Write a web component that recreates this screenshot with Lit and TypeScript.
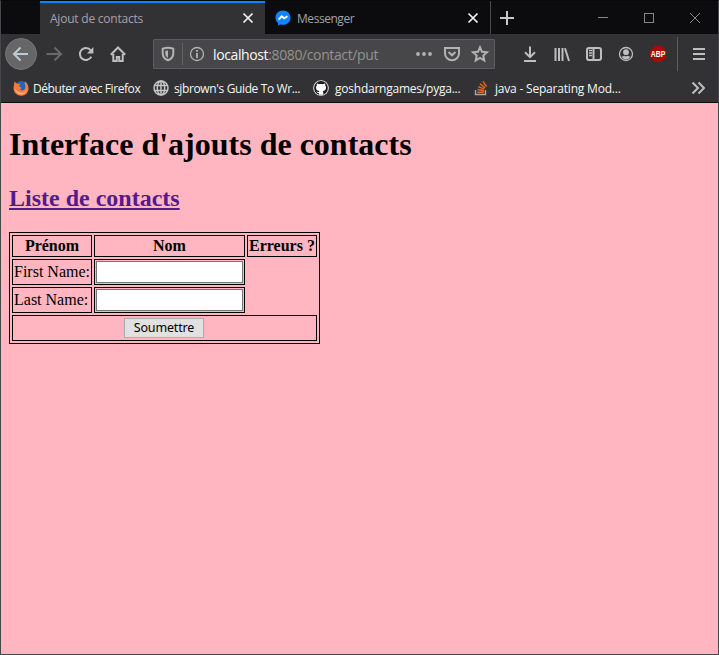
import { LitElement, html, css, svg } from "lit";
import { customElement, property } from "lit/decorators.js";

const icons: Record<string, unknown> = {
  back: svg`<path d="M15 8H1.5M7.5 1.5 1 8l6.500 6.500" class="l"/>`,
  forward: svg`<path d="M0.500 8H14M8.500 1.500 15 8l-6.500 6.500" class="l"/>`,
  reload: svg`<path d="M13.300 10.600A6 6 0 1 1 12.600 4.200" class="l"/><path d="M15.400 1v6.500H9z" class="f"/>`,
  home: svg`<path d="M.800 8.700 8 1.500l7.200 7.200M3.300 8v7h3.500v-4h2.400v4h3.500V8" class="l"/>`,
  shield: svg`<path d="M8 1.800c2 0 3.800.4 5.300 1v4.500c0 3.400-2.300 6-5.300 7-3-1-5.300-3.600-5.300-7V2.800c1.500-.6 3.300-1 5.300-1z" class="l"/><path d="M8 4.500c-1 0-2 .2-2.700.4v2.600c0 2 1 3.500 2.700 4.400z" class="f"/>`,
  info: svg`<circle cx="8" cy="8" r="6.500" class="t"/><path d="M7.100 7h1.800v5H7.100zM7.100 4h1.800v1.800H7.100z" class="f"/>`,
  dots: svg`<circle cx="2" cy="8" r="1.900" class="f"/><circle cx="8" cy="8" r="1.900" class="f"/><circle cx="14" cy="8" r="1.900" class="f"/>`,
  pocket: svg`<path d="M1 2h14v5.500a7 6.700 0 0 1-14 0z" class="l"/><path d="M4.600 6 8 9.300 11.400 6" class="l"/>`,
  star: svg`<path d="m8 1.300 2 4.500 5 .5-3.700 3.300 1 4.900L8 12l-4.300 2.500 1-4.900L1 6.300l5-.5z" class="l"/>`,
  download: svg`<path d="M8 .5v10.300M3 6.200l5 5 5-5M2 15h12" class="l"/>`,
  library: svg`<path d="M1.500 2v13M5 2v13M8.500 2v13M11 2.300 15 15" class="l"/>`,
  sidebar: svg`<rect x="1" y="2" width="14" height="12" rx="2" class="l"/><path d="M7.500 2v12" class="l"/><path d="M3 4.500h3M3 7h3M3 9.500h3" class="t"/>`,
  account: svg`<circle cx="8" cy="8" r="6.500" class="t"/><circle cx="8" cy="6.200" r="2.900" class="f"/><path d="M3.500 10.500c1 .2 2-.8 3-.8 1 .8 2 .8 3 0 1 0 2 1 3 .8-1 2-2.700 3-4.500 3s-3.500-1-4.500-3z" class="f"/>`,
  abp: svg`<path d="M4.700 0h6.600L16 4.700v6.600L11.300 16H4.700L0 11.300V4.700z" fill="#a80b00"/><text x="8" y="11" text-anchor="middle" font-family="Liberation Sans, sans-serif" font-size="8.500" font-weight="700" fill="#fff" textLength="14.500" lengthAdjust="spacingAndGlyphs">ABP</text>`,
  menu: svg`<path d="M2 3h12M2 8h12M2 13h12" class="l"/>`,
  close: svg`<path d="m3.500 3.500 9 9m0-9-9 9" class="m"/>`,
  plus: svg`<path d="M8 1v14M1 8h14" class="l"/>`,
  min: svg`<path d="M3 7.500h10" class="h"/>`,
  max: svg`<rect x="3.500" y="3.500" width="9" height="9" class="h"/>`,
  quit: svg`<path d="m3 3 10 10M13 3 3 13" class="h"/>`,
  more: svg`<path d="m2.500 2.500 5.500 5.500-5.500 5.500M8.500 2.500l5.500 5.500-5.500 5.500" class="l"/>`,
  messenger: svg`<path d="M8 .500c-4.300 0-7.500 3.100-7.500 7.200 0 2.100.9 4 2.500 5.300v2.600l2.300-1.200c.8.300 1.700.4 2.700.4 4.300 0 7.500-3.100 7.500-7.100S12.300.5 8 .5z" fill="#1083ff"/><path d="m3.600 9.500 3.100-3.200 2.500 2 3.200-2" fill="none" stroke="#fff" stroke-width="1.800"/>`,
  firefox: svg`<circle cx="8.300" cy="7" r="6" fill="#1768c9"/><path d="M1.500 1.500 4 3.700l3.500.2-1.500 2 2.500 2-1.500 1.500c2 1.700 4.800.8 5.300-1.700.4-2-1-3.500-.5-6.500 3 2.200 3.700 4.500 3.700 7.300 0 4.200-3 7.200-7 7.200C3.500 15.900.3 12 .5 7.700z" fill="#f07a42"/><path d="M2 8c1 3 4 5.300 8 4.600 2-.4 3.200-2 3.700-4.400.4 3.300-2 6.300-5.200 6.300C5 14.500 2 12 2 8z" fill="#ffb36b"/>`,
  globe: svg`<circle cx="8" cy="8" r="7" class="g"/><ellipse cx="8" cy="8" rx="3.700" ry="7" class="g"/><path d="M8 1v14M1.500 5.500h13M1.500 10.500h13" class="g"/>`,
  github: svg`<circle cx="8" cy="8" r="7.800" fill="#ececec"/><circle cx="8" cy="8" r="6.900" fill="#1b1b1d"/><path d="M3.900 3.400c.9 0 1.500.4 2 .8 1.400-.3 2.800-.3 4.200 0 .5-.4 1.100-.8 2-.8.4.8.3 1.500.1 2 .7.8.9 1.600.8 2.600-.2 2-1.500 2.900-3.200 3.100.5.600.5 1.200.5 3.700H5.900v-1.900c-1.600.3-1.800-.9-2.500-1.500 1-.1 1.300 1 2.500.7 0-.4.1-.7.400-1C4.500 10.900 3.200 10 3 8c-.1-1 .1-1.800.8-2.600-.2-.5-.3-1.200.1-2z" fill="#fff"/>`,
  stack: svg`<path d="M2.500 10v4.500h10V10" fill="none" stroke="#a5a8ab" stroke-width="1.400"/><path d="M4.300 12.300h6.400M4.500 9.500l6.400 1.200M5.200 6.700l6 2.500M7 3.700l5 4.200M10 1.300l3.500 5.200" fill="none" stroke="#e96620" stroke-width="1.400"/>`,
};

@customElement("ui-icon")
class UiIcon extends LitElement {
  @property() name = "";
  static styles = css`
    :host { display: flex; justify-content: center; align-items: center; flex: none; width: 32px; }
    svg { display: block; width: 16px; height: 16px; overflow: visible; }
    .l { fill: none; stroke: currentColor; stroke-width: 2; }
    .m { fill: none; stroke: currentColor; stroke-width: 1.700; }
    .g { fill: none; stroke: currentColor; stroke-width: 1.500; }
    .t { fill: none; stroke: currentColor; stroke-width: 1.300; }
    .h { fill: none; stroke: currentColor; stroke-width: 1; }
    .f { fill: currentColor; }
  `;
  render() {
    return html`<svg viewBox="0 0 16 16">${icons[this.name]}</svg>`;
  }
}

const bookmarks = [
  { icon: "firefox", label: "Débuter avec Firefox", cls: "b1" },
  { icon: "globe", label: "sjbrown's Guide To Wr...", cls: "b2" },
  { icon: "github", label: "goshdarngames/pyga...", cls: "b3" },
  { icon: "stack", label: "java - Separating Mod...", cls: "b4" },
];

@customElement("app-root")
class AppRoot extends LitElement {
  static styles = css`
    :host {
      display: flex; flex-direction: column; box-sizing: border-box; width: 719px; height: 655px;
      border: 1px solid #48484c; border-top-color: #08080a; background: #ffb6c1;
      overflow: hidden; font-family: "Open Sans", "Noto Sans", sans-serif; color: #f9f9fa;
    }
    .tabs { display: flex; height: 33px; flex: none; background: #0c0c0e; padding-left: 39px; }
    .tab { display: flex; align-items: center; width: 225px; box-sizing: border-box; font-size: 12px; color: #a5a1a9; white-space: nowrap; }
    .tab.on { background: #323234; border-top: 2px solid #0a84ff; padding-left: 10px; }
    .tab.on ui-icon { padding-bottom: 2px; }
    .tab.off { border-right: 1px solid #4b4b4e; width: 226px; padding-left: 10px; }
    .tab.on .label { padding-bottom: 2px; letter-spacing: -0.220px; }
    .tab .label { flex: 1; padding-top: 2px; letter-spacing: -0.400px; }
    .tab.off .label { letter-spacing: -0.450px; }
    .tab .fav { width: 16px; margin-right: 6px; }
    .tab .x { width: 16px; margin-right: 9px; color: #f4f4f4; }
    .plus { color: #c8c8c9; }
    .grow { flex: 1; }
    .win { width: 46px; color: #87878a; }
    .nav { display: flex; align-items: center; height: 40px; flex: none; background: #323234; color: #bebebf; padding-left: 4px; }
    .backbtn { display: flex; width: 30px; height: 30px; border: 1px solid #757577; border-radius: 50%; background: #666668; color: #bacbd1; justify-content: center; }
    .dim { color: #69696b; }
    .fwd { margin-left: 1px; }
    .url { display: flex; align-items: center; box-sizing: border-box; width: 342px; height: 30px; border: 1px solid #5c5c60; background: #474749; margin-left: 19px; margin-right: 19px; border-radius: 1px; }
    .url ui-icon { width: 28px; color: #b3b3b4; }
    .rule { width: 1px; height: 22px; background: #626265; }
    .addr { flex: 1; font-size: 14px; color: #96928e; white-space: nowrap; padding-left: 2px; letter-spacing: -0.380px; padding-top: 1px; }
    .host { color: #f9f9fa; }
    .sep { width: 1px; height: 34px; background: #5c5c5f; margin: 0 5px 0 3px; }
    .marks { display: flex; align-items: center; height: 28px; flex: none; background: #323234; border-bottom: 1px solid #0c0c0e; padding-left: 12px; font-size: 12px; color: #bebebf; }
    .marks > ui-icon { margin-left: 1px; }
    .mark { display: flex; align-items: center; width: 160px; white-space: nowrap; color: #f6f6f6; gap: 5px; }
    .mark ui-icon { width: 16px; color: #c6c6c7; }
    .b1 { width: 140px; letter-spacing: -0.430px; gap: 4px; }
    .b2 { letter-spacing: -0.370px; }
    .b3 { gap: 6px; letter-spacing: -0.230px; }
    .b4 { letter-spacing: -0.200px; gap: 6px; width: 208px; }
    .page { flex: 1; color: #000; font: 16px "Liberation Serif", serif; padding: 0 8px; }
    h1 { font-size: 32px; line-height: 37px; margin: 23px 0 21px; }
    h2 { font-size: 24px; line-height: 28px; margin: 0 0 20px; }
    a { color: #551a8b; text-decoration: underline; }
    table { border: 1px solid #000; border-spacing: 2px; width: 311px; table-layout: fixed; line-height: 18px; }
    th, td { border: 1px solid #000; padding: 1px; box-sizing: border-box; white-space: nowrap; }
    th { height: 22px; }
    td { height: 26px; }
    .c1 { width: 80px; }
    .c2 { width: 151px; }
    .c3 { width: 70px; }
    .send { text-align: center; }
    input { display: block; box-sizing: border-box; width: 147px; height: 22px; border: 1px solid #767676; background: #fff; padding: 1px; border-radius: 0; outline: none; }
    button { display: block; margin: 0 0 0 110px; box-sizing: border-box; width: 80px; height: 20px; padding: 0; border: 1px solid #adadad; background: #e1e1e1; color: #000; border-radius: 0; font: 12.500px/18px "Noto Sans", sans-serif; letter-spacing: -0.150px; }
  `;
  render() {
    return html`
      <div class="tabs">
        <div class="tab on"><span class="label">Ajout de contacts</span><ui-icon class="x" name="close"></ui-icon></div>
        <div class="tab off"><ui-icon class="fav" name="messenger"></ui-icon><span class="label">Messenger</span><ui-icon class="x" name="close"></ui-icon></div>
        <ui-icon class="plus" name="plus"></ui-icon>
        <div class="grow"></div>
        <ui-icon class="win" name="min"></ui-icon>
        <ui-icon class="win" name="max"></ui-icon>
        <ui-icon class="win" name="quit"></ui-icon>
      </div>
      <div class="nav">
        <div class="backbtn"><ui-icon name="back"></ui-icon></div>
        <ui-icon class="dim fwd" name="forward"></ui-icon>
        <ui-icon name="reload"></ui-icon>
        <ui-icon name="home"></ui-icon>
        <div class="url">
          <ui-icon name="shield"></ui-icon>
          <div class="rule"></div>
          <ui-icon name="info"></ui-icon>
          <span class="addr"><span class="host">localhost</span>:8080/contact/put</span>
          <ui-icon name="dots"></ui-icon>
          <ui-icon name="pocket"></ui-icon>
          <ui-icon name="star"></ui-icon>
        </div>
        <ui-icon name="download"></ui-icon>
        <ui-icon name="library"></ui-icon>
        <ui-icon name="sidebar"></ui-icon>
        <ui-icon name="account"></ui-icon>
        <ui-icon name="abp"></ui-icon>
        <div class="sep"></div>
        <ui-icon name="menu"></ui-icon>
      </div>
      <div class="marks">
        ${bookmarks.map((b) => html`<div class="mark ${b.cls}"><ui-icon name=${b.icon}></ui-icon><span>${b.label}</span></div>`)}
        <ui-icon name="more"></ui-icon>
      </div>
      <div class="page">
        <h1>Interface d'ajouts de contacts</h1>
        <h2><a>Liste de contacts</a></h2>
        <table>
          <colgroup><col class="c1" /><col class="c2" /><col class="c3" /></colgroup>
          <tbody>
            <tr><th>Prénom</th><th>Nom</th><th>Erreurs ?</th></tr>
            <tr><td>First Name:</td><td><input type="text" /></td></tr>
            <tr><td>Last Name:</td><td><input type="text" /></td></tr>
            <tr><td class="send" colspan="3"><button>Soumettre</button></td></tr>
          </tbody>
        </table>
      </div>
    `;
  }
}
